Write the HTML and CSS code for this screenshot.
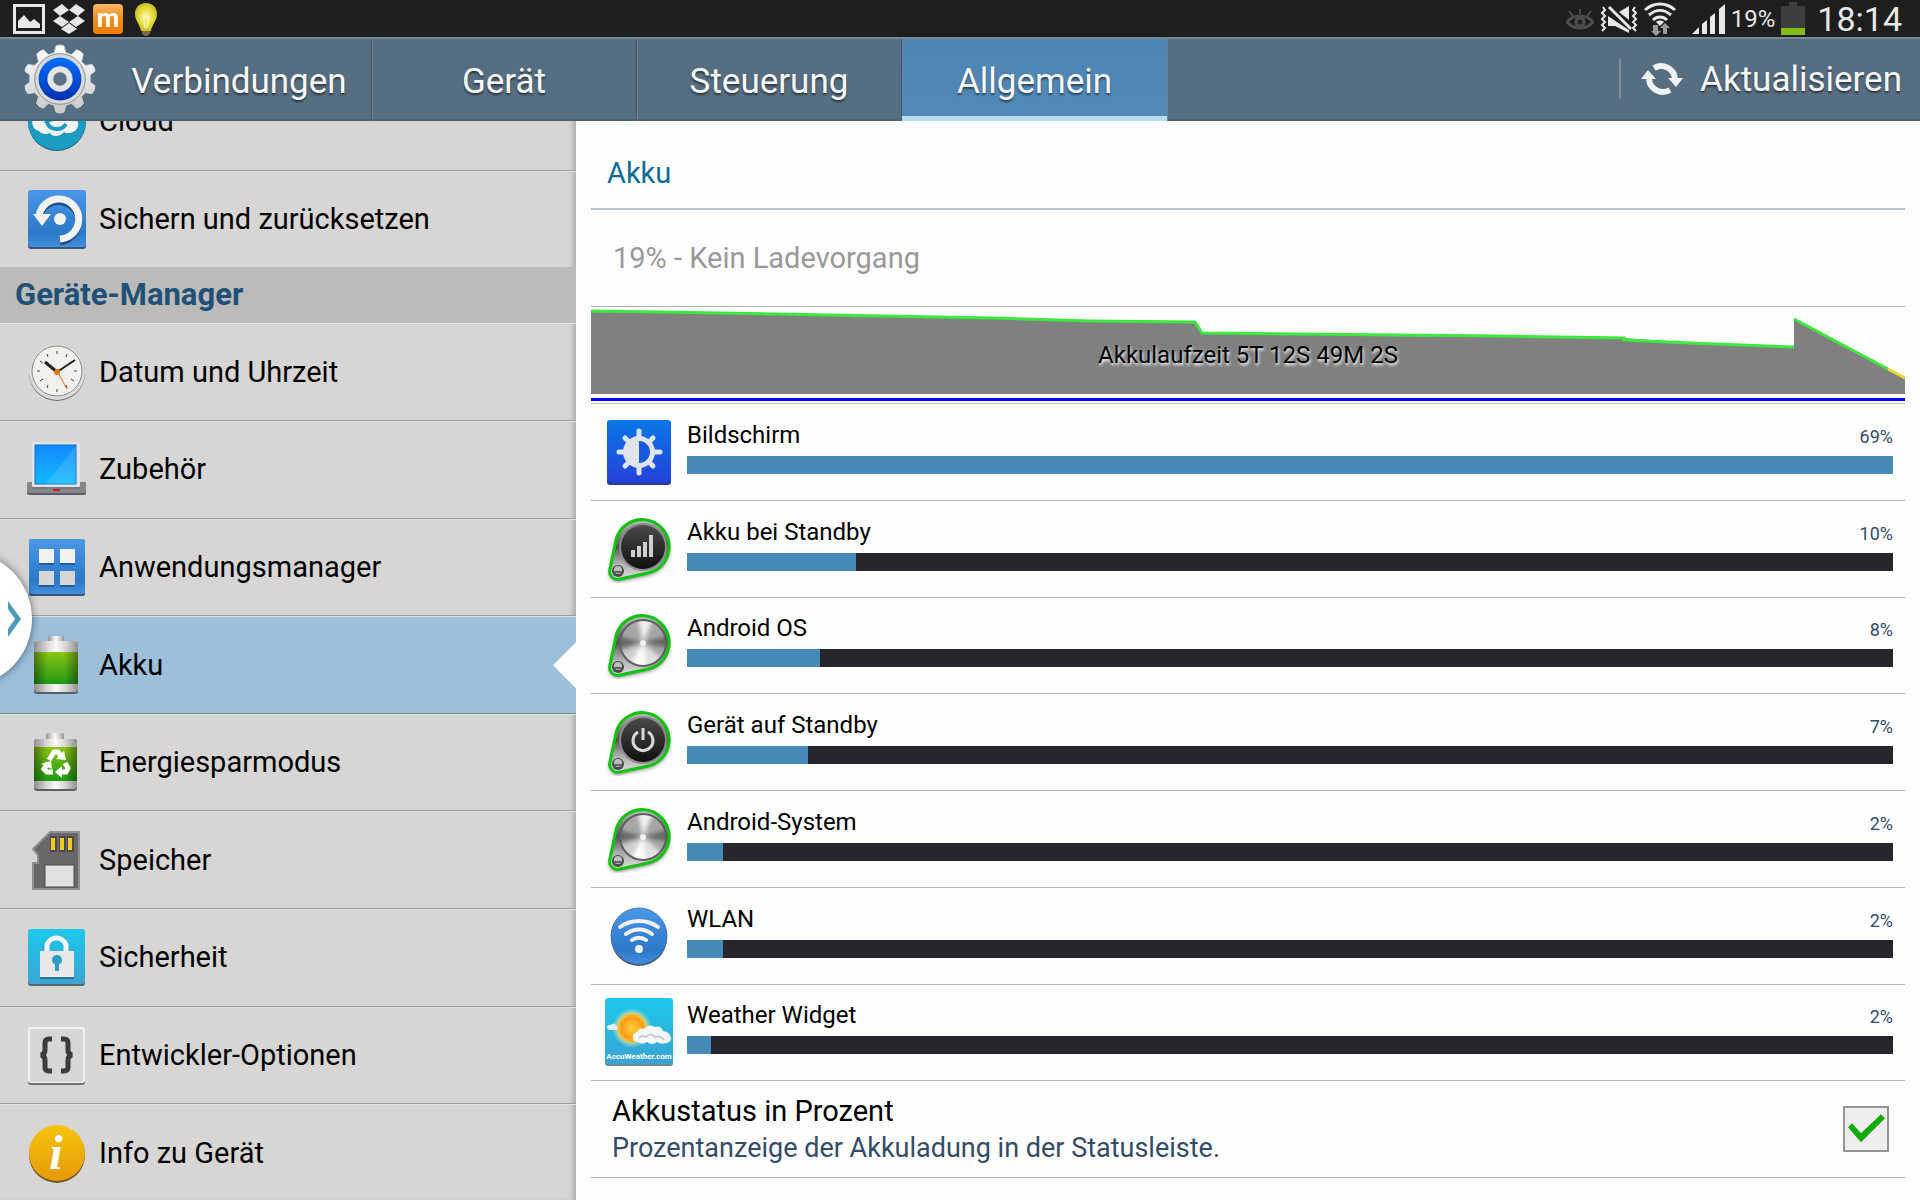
FILE: index.html
```html
<!DOCTYPE html>
<html lang="de">
<head>
    <meta charset="UTF-8">
    <meta name="viewport" content="width=device-width, initial-scale=1.0">
    <title>Einstellungen</title>
    <link rel="stylesheet" href="styles.css">
</head>
<body>

    <!-- Shared gradients and icon parts -->
    <svg class="defs" width="0" height="0" aria-hidden="true">
        <defs>
            <linearGradient id="blue" x1="0" y1="0" x2="0" y2="1">
                <stop offset="0" stop-color="#4a98e8"/><stop offset=".75" stop-color="#2c78c8"/><stop offset="1" stop-color="#4390e0"/>
            </linearGradient>
            <linearGradient id="deepblue" x1="0" y1="0" x2="0" y2="1">
                <stop offset="0" stop-color="#0a78e8"/><stop offset="1" stop-color="#2440d8"/>
            </linearGradient>
            <linearGradient id="ring" x1="0" y1="0" x2="0" y2="1">
                <stop offset="0" stop-color="#0070ff"/><stop offset="1" stop-color="#0030b0"/>
            </linearGradient>
            <linearGradient id="cyan" x1="0" y1="0" x2="0" y2="1">
                <stop offset="0" stop-color="#1cc8ea"/><stop offset="1" stop-color="#3ba4d4"/>
            </linearGradient>
            <linearGradient id="silver" x1="0" y1="0" x2="0" y2="1">
                <stop offset="0" stop-color="#ffffff"/><stop offset="1" stop-color="#c8c8c8"/>
            </linearGradient>
            <linearGradient id="metal" x1="0" y1="0" x2="1" y2="0">
                <stop offset="0" stop-color="#8f8f8f"/><stop offset=".3" stop-color="#d8d8d8"/><stop offset=".5" stop-color="#fafafa"/><stop offset=".75" stop-color="#d0d0d0"/><stop offset="1" stop-color="#8f8f8f"/>
            </linearGradient>
            <linearGradient id="green" x1="0" y1="0" x2="0" y2="1">
                <stop offset="0" stop-color="#8cc414"/><stop offset="1" stop-color="#1f9a14"/>
            </linearGradient>
            <linearGradient id="shade" x1="0" y1="0" x2="1" y2="0">
                <stop offset="0" stop-color="#000" stop-opacity=".4"/><stop offset=".3" stop-color="#000" stop-opacity="0"/><stop offset=".7" stop-color="#000" stop-opacity="0"/><stop offset="1" stop-color="#000" stop-opacity=".4"/>
            </linearGradient>
            <linearGradient id="screen" x1="0" y1="0" x2="0" y2="1">
                <stop offset="0" stop-color="#1488ff"/><stop offset="1" stop-color="#10bcff"/>
            </linearGradient>
            <linearGradient id="gold" x1="0" y1="0" x2="0" y2="1">
                <stop offset="0" stop-color="#f6c40c"/><stop offset="1" stop-color="#e69a04"/>
            </linearGradient>
            <linearGradient id="orange" x1="0" y1="0" x2="0" y2="1">
                <stop offset="0" stop-color="#f9b765"/><stop offset=".5" stop-color="#f08c1c"/><stop offset="1" stop-color="#ee7d00"/>
            </linearGradient>
            <linearGradient id="pinbody" x1="0" y1="0" x2="0" y2="1">
                <stop offset="0" stop-color="#c4c4c4"/><stop offset=".45" stop-color="#505050"/><stop offset=".7" stop-color="#a8a8a8"/><stop offset="1" stop-color="#e0e0e0"/>
            </linearGradient>
            <linearGradient id="dark" x1="0" y1="0" x2="0" y2="1">
                <stop offset="0" stop-color="#4a4a4a"/><stop offset="1" stop-color="#101010"/>
            </linearGradient>
            <radialGradient id="sun">
                <stop offset="0" stop-color="#ffd23c"/><stop offset=".7" stop-color="#fb9d1c"/><stop offset="1" stop-color="#f7c948"/>
            </radialGradient>
            <radialGradient id="glow">
                <stop offset="0" stop-color="#fffbb0"/><stop offset=".6" stop-color="#e8e040"/><stop offset="1" stop-color="#c8c020"/>
            </radialGradient>
            <radialGradient id="halo">
                <stop offset=".6" stop-color="#fff3a0" stop-opacity=".8"/><stop offset="1" stop-color="#fff3a0" stop-opacity="0"/>
            </radialGradient>
            <filter id="soft" x="-20%" y="-20%" width="140%" height="140%"><feGaussianBlur stdDeviation="2"/></filter>
            <clipPath id="discClip"><circle cx="38" cy="32" r="23"/></clipPath>
        </defs>
        <symbol id="pin" viewBox="0 0 68 68">
            <path d="M5 56 L11 27 A27 27 0 1 1 43 60 L15 66 A8 8 0 0 1 5 56Z" fill="#000" opacity=".6" filter="url(#soft)"/>
            <path d="M5 54 L11 25 A27 27 0 1 1 43 58 L15 64 A8 8 0 0 1 5 54Z" fill="url(#pinbody)" stroke="#0fc40f" stroke-width="3"/>
            <circle cx="13" cy="56" r="6" fill="#4a4a4a"/>
            <circle cx="13" cy="55" r="4" fill="#bdbdbd"/>
            <path d="M9 57h8" stroke="#666" stroke-width="2"/>
        </symbol>
        <symbol id="disc" viewBox="0 0 68 68">
            <g clip-path="url(#discClip)">
                <circle cx="38" cy="32" r="23" fill="#a6a6a6"/>
                <g filter="url(#soft)">
                    <path d="M38 32L11 38L11 24Z" fill="#666"/>
                    <path d="M38 32L65 24L65 37Z" fill="#666"/>
                    <path d="M38 32L32 4H50Z" fill="#f0f0f0"/>
                    <path d="M38 32L22 60H42Z" fill="#fff"/>
                    <path d="M38 32L42 60L62 52Z" fill="#e0e0e0"/>
                    <path d="M38 32L10 44L22 60Z" fill="#d0d0d0"/>
                </g>
                <circle cx="38" cy="32" r="3" fill="#fff" opacity=".8"/>
            </g>
            <circle cx="38" cy="32" r="23" fill="none" stroke="#5f5f5f" stroke-width="2"/>
        </symbol>
    </svg>

    <div class="statusbar">
        <div class="notifications">
            <svg width="32" height="30" viewBox="0 0 32 30"><path d="M1.500 1.500h29v27h-29z" fill="none" stroke="#e8e8e8" stroke-width="3"/><path d="M5 24V17l6-6 6 7 4-3 6 5v4z" fill="#e8e8e8"/></svg>
            <svg width="32" height="30" viewBox="0 0 32 30" fill="#e8e8e8"><path d="M9 0l7 6-9 6-7-6zM23 0l9 6-7 6-9-6zM0 17l7-5 9 6-7 5zM25 12l7 5-9 6-7-5zM16 19l8 6-8 5-8-5z"/></svg>
            <svg width="30" height="30" viewBox="0 0 30 30"><rect width="30" height="30" rx="4" fill="url(#orange)"/><text x="15" y="23" text-anchor="middle" class="m-logo">m</text></svg>
            <svg width="28" height="34" viewBox="0 0 28 34"><path d="M15 1c7 0 11 5 11 11 0 7-5 10-6 17h-10C9 22 4 19 4 12 4 6 8 1 15 1z" fill="url(#glow)"/><path d="M12 14l2 12M18 14l-2 12" stroke="#fffde0" stroke-width="1" fill="none"/><path d="M11 29h8v3l-3 2h-2l-3-2z" fill="#7a6a50"/></svg>
        </div>
        <div class="system">
            <svg width="28" height="22" viewBox="0 0 28 22" fill="none" stroke="#4c4c4c" stroke-width="2"><path d="M1 14c7-8 19-8 26 0-7 8-19 8-26 0z" stroke-width="3"/><circle cx="14" cy="14" r="4" stroke-width="3"/><path d="M14 1v5M3 3l4 5M25 3l-4 5"/></svg>
            <svg width="38" height="28" viewBox="0 0 38 28" fill="none" stroke="#e8e8e8" stroke-width="2"><path d="M3 2l2 3-3 3 3 3-3 3 3 3-3 3 3 3-3 3M35 2l-2 3 3 3-3 3 3 3-3 3 3 3-3 3 3 3"/><path d="M8 11v10h7l14 7v-3zM19 7l10-6v14z" fill="#e8e8e8" stroke="none"/><path d="M9 2l22 22" stroke-width="3"/></svg>
            <svg width="32" height="34" viewBox="0 0 32 34" fill="none" stroke="#e8e8e8" stroke-width="3"><path d="M1 8c9-8 21-8 30 0M5 13c7-6 15-6 22 0M9 18c4-4 10-4 14 0"/><path d="M12 20c2-2 6-2 8 0l-4 4z" fill="#e8e8e8" stroke="none"/><path d="M9 23h5v6h3l-5 5-5-5h2zM19 32v-6h-3l5-5 5 5h-3v6z" fill="#9a9a9a" stroke="none"/></svg>
            <svg class="signal" width="33" height="30" viewBox="0 0 33 30" fill="#e8e8e8"><path d="M0 30l7-7v7zM10 20l5-4v14h-5zM18 13l5-4v21h-5zM27 5l6-5v30h-6z"/></svg>
            <span class="charge">19%</span>
            <svg width="24" height="33" viewBox="0 0 24 33"><path d="M8 0h8v4h8v22H0V4h8z" fill="#3d3d3d"/><path d="M0 26h24v7H0z" fill="#82bc14"/></svg>
            <span class="clock">18:14</span>
        </div>
    </div>

    <header class="topbar">
        <svg class="gear" width="72" height="72" viewBox="0 0 74 74">
            <path d="M33 3q4-2 8 0l2 7 6 2 5-5q5 1 7 5l-2 7 4 4 7-1q3 3 3 7l-5 4v7l5 4q0 5-3 8l-7-1-4 4 2 7q-2 4-7 5l-5-5-6 2-2 7q-4 2-8 0l-2-7-6-2-5 5q-5-1-7-5l2-7-4-4-7 1q-3-3-3-8l5-4v-7l-5-4q0-4 3-7l7 1 4-4-2-7q2-4 7-5l5 5 6-2z" fill="url(#silver)" stroke="#cfd4d8" stroke-width="1"/>
            <circle cx="37" cy="37" r="26" fill="#dadada" stroke="#8c8c8c" stroke-width="1"/>
            <circle cx="37" cy="37" r="22" fill="url(#ring)"/>
            <circle cx="37" cy="37" r="10" fill="#587184" stroke="#e4e4e4" stroke-width="6"/>
        </svg>
        <nav class="tabs">
            <button class="tab">Verbindungen</button>
            <button class="tab">Gerät</button>
            <button class="tab">Steuerung</button>
            <button class="tab active">Allgemein</button>
        </nav>
        <button class="refresh">
            <svg width="42" height="36" viewBox="0 0 42 36"><g fill="none" stroke="#f2f2f2" stroke-width="6"><path d="M13 7a14 14 0 0 1 21 11"/><path d="M29 29A14 14 0 0 1 8 18"/></g><path d="M27 17h15l-7 9zM0 18h15L7 9z" fill="#f2f2f2"/></svg>
            Aktualisieren
        </button>
    </header>

    <div class="content">
        <aside class="sidebar">
            <nav class="menu">
                <a class="item" href="#">
                    <svg class="icon" viewBox="0 0 60 60"><circle cx="30" cy="31" r="29" fill="#155f78"/><circle cx="30" cy="30" r="29" fill="#1c9cc2"/><path d="M12 40a9 9 0 0 1-3-16c2-12 20-16 26-6 9-2 15 4 14 10a8 8 0 0 1-3 13c-5 2-8 1-9 0-4 5-12 5-14 1-4 2-9 1-11-2z" fill="#f2f2f2"/><path d="M20 30c1 9 14 11 19 3" fill="none" stroke="#1c9cc2" stroke-width="4"/><path d="M17 32l3-7 7 5z" fill="#1c9cc2"/></svg>
                    Cloud
                </a>
                <a class="item" href="#">
                    <svg class="icon" viewBox="0 0 60 60"><rect x="1" y="2" width="58" height="58" rx="3" fill="#3a5676"/><rect x="1" y="1" width="58" height="57" rx="3" fill="url(#blue)"/><path d="M12 27a20 20 0 1 1 21 24" transform="translate(0 2)" fill="none" stroke="#1f4f86" stroke-width="6"/><path d="M12 27a20 20 0 1 1 21 23" fill="none" stroke="#f2f2f2" stroke-width="7"/><path d="M6 25h18L15 37z" fill="#f2f2f2"/><circle cx="33" cy="30" r="6" fill="#f2f2f2"/></svg>
                    Sichern und zurücksetzen
                </a>
                <h2 class="group">Geräte-Manager</h2>
                <a class="item" href="#">
                    <svg class="icon" viewBox="0 0 60 60"><circle cx="30" cy="31" r="28" fill="#6a6a6a"/><circle cx="30" cy="30" r="28" fill="#dcdcdc"/><circle cx="30" cy="29" r="25" fill="#f3f1ee" stroke="#8a8a8a" stroke-width="1"/><g stroke="#444" stroke-width="1"><path d="M30 9v3M30 47v3M10 29h3M47 29h3M20 12l1 3M40 12l-1 3M13 19l3 2M47 19l-3 2M13 39l3-2M47 39l-3-2M20 46l1-3M40 46l-1-3"/></g><path d="M30 30L18 20" stroke="#222" stroke-width="3"/><path d="M30 30l18-12" stroke="#222" stroke-width="2"/><path d="M30 29l10 18" stroke="#f26a1b" stroke-width="1"/><circle cx="30" cy="30" r="3" fill="#f26a1b"/></svg>
                    Datum und Uhrzeit
                </a>
                <a class="item" href="#">
                    <svg class="icon" viewBox="0 0 60 60"><rect x="0" y="43" width="59" height="13" rx="2" fill="#5c5d60"/><rect x="0" y="43" width="59" height="11" rx="2" fill="#85878b"/><rect x="5" y="4" width="48" height="46" rx="2" fill="#77797c"/><rect x="5" y="3" width="48" height="45" rx="1" fill="#e2e4e6"/><rect x="8" y="6" width="41" height="39" fill="url(#screen)" stroke="#0a70c8"/><path d="M49 7v38H19z" fill="#fff" opacity=".12"/><rect x="26" y="50" width="7" height="2" fill="#d01818"/></svg>
                    Zubehör
                </a>
                <a class="item" href="#">
                    <svg class="icon" viewBox="0 0 60 60"><rect x="2" y="3" width="56" height="56" rx="2" fill="#3a5676"/><rect x="2" y="2" width="56" height="55" rx="2" fill="url(#blue)"/><path d="M12 13h15v15H12zM33 13h15v15H33zM12 35h15v15H12zM33 35h15v15H33z" fill="#235a98"/><path d="M12 12h15v14H12zM33 12h15v14H33z" fill="#f2f2f2"/><path d="M12 34h15v14H12zM33 34h15v14H33z" fill="#d4d6d8"/></svg>
                    Anwendungsmanager
                </a>
                <a class="item selected" href="#">
                    <svg class="icon" viewBox="0 0 60 60"><rect x="21" y="1" width="16" height="8" rx="2" fill="url(#metal)"/><rect x="7" y="7" width="44" height="52" rx="3" fill="#5a5f63"/><rect x="7" y="6" width="44" height="51" rx="3" fill="url(#metal)"/><rect x="7" y="17" width="44" height="32" fill="url(#green)"/><rect x="7" y="17" width="44" height="32" fill="url(#shade)"/></svg>
                    Akku
                </a>
                <a class="item" href="#">
                    <svg class="icon" viewBox="0 0 60 60"><rect x="19" y="1" width="18" height="8" rx="2" fill="url(#metal)"/><rect x="7" y="7" width="43" height="52" rx="3" fill="#5a5f63"/><rect x="7" y="7" width="43" height="50" rx="3" fill="url(#metal)"/><rect x="7" y="15" width="43" height="34" fill="url(#green)"/><rect x="7" y="15" width="43" height="34" fill="url(#shade)"/><g fill="none" stroke="#fff" stroke-width="5"><path d="M22 28l5-8h4l3 4"/><path d="M38 31l3 5-2 4h-6"/><path d="M26 40h-6l-3-3 4-6"/></g><path d="M29 27l10 1-2-9zM35 34v12l-7-6zM14 32l10-3 1 8z" fill="#fff"/></svg>
                    Energiesparmodus
                </a>
                <a class="item" href="#">
                    <svg class="icon" viewBox="0 0 60 60"><path d="M23 2h29v57H6V33h5v-8l-5-6z" fill="#67696b" stroke="#8e9092" stroke-width="2"/><path d="M23 6h7v16h-7zM32 6h7v16h-7zM40 6h7v16h-7z" fill="#4a4b4d"/><path d="M24 8h4v12h-4zM33 8h4v12h-4zM41 8h4v12h-4z" fill="#f2cc1c"/><path d="M18 35h29v22H18z" fill="#dfe1e2" stroke="#48494b"/></svg>
                    Speicher
                </a>
                <a class="item" href="#">
                    <svg class="icon" viewBox="0 0 60 60"><rect x="1" y="3" width="57" height="56" rx="3" fill="#55666e"/><rect x="1" y="2" width="57" height="55" rx="3" fill="url(#cyan)"/><path d="M20 26v-8a10 10 0 0 1 19 0v8" fill="none" stroke="#f4f4f4" stroke-width="5"/><path d="M13 26h34v26H13z" fill="#2a7896"/><path d="M13 24h34v26H13z" fill="#e8e8e8"/><circle cx="30" cy="33" r="5" fill="#2e9dc4"/><path d="M28 34h4v10h-4z" fill="#2e9dc4"/></svg>
                    Sicherheit
                </a>
                <a class="item" href="#">
                    <svg class="icon" viewBox="0 0 60 60"><rect x="1" y="3" width="57" height="57" rx="3" fill="#6e6e6e"/><rect x="1" y="2" width="57" height="56" rx="3" fill="#f2f2f2"/><rect x="3" y="4" width="53" height="53" rx="2" fill="#d6d6d6"/><g fill="none" stroke="#3c3c3c" stroke-width="5"><path d="M25 14h-3q-4 0-4 4v7q0 4-4 5 4 1 4 5v7q0 4 4 4h3"/><path d="M34 14h3q4 0 4 4v7q0 4 4 5-4 1-4 5v7q0 4-4 4h-3"/></g></svg>
                    Entwickler-Optionen
                </a>
                <a class="item" href="#">
                    <svg class="icon" viewBox="0 0 60 60"><circle cx="30" cy="32" r="28" fill="#6b5a2c"/><circle cx="30" cy="30" r="28" fill="url(#gold)"/><text x="29" y="46" text-anchor="middle" class="info-letter">i</text></svg>
                    Info zu Gerät
                </a>
            </nav>
        </aside>

        <main class="panel">
            <h1 class="title">Akku</h1>
            <p class="state">19% - Kein Ladevorgang</p>
            <div class="chart">
                <svg viewBox="0 0 1314 96" preserveAspectRatio="none">
                    <path d="M0 4L70 5L400 11L500 14L604 15L611 26L909 29L1033 31L1099 36L1203 40V12L1314 71V87H0z" fill="#808080"/>
                    <path d="M0 4L70 5L400 11L500 14L604 15L611 26L909 29L1033 31V33L1099 36L1203 40M1203 12L1297 62" fill="none" stroke="#3ee83e" stroke-width="3"/>
                    <path d="M1297 62l17 9" stroke="#e8d830" stroke-width="3"/>
                    <path d="M0 92.500H1314" stroke="#0000ff" stroke-width="3"/>
                </svg>
                <span class="runtime">Akkulaufzeit 5T 12S 49M 2S</span>
            </div>

            <div class="usage">
                <div class="row">
                    <svg class="app-icon" viewBox="0 0 68 68"><rect x="2" y="3" width="64" height="64" rx="3" fill="#2a3c8c"/><rect x="2" y="2" width="64" height="63" rx="3" fill="url(#deepblue)"/><g stroke="#dfe3ea" stroke-width="5" stroke-linecap="round"><path d="M34 13v6M34 49v6M14 34h6M48 34h7M20 20l4 4M48 20l-4 4M20 48l4-4M48 48l-4-4"/></g><circle cx="34" cy="34" r="16" fill="#dfe3ea"/><path d="M34 23a11 11 0 0 1 0 22z" fill="#1a58dc"/></svg>
                    <div class="app">
                        <div class="label"><span>Bildschirm</span><span class="percent">69%</span></div>
                        <div class="bar"><div class="fill" style="width: 100%"></div></div>
                    </div>
                </div>
                <div class="row">
                    <svg class="app-icon" viewBox="0 0 68 68"><use href="#pin"/><circle cx="38" cy="32" r="24" fill="#8a8a8a"/><circle cx="38" cy="32" r="22" fill="url(#dark)"/><path d="M26 35h4v7h-4zM32 31h4v11h-4zM38 27h4v15h-4zM44 20h4v22h-4z" fill="#cfcfcf"/></svg>
                    <div class="app">
                        <div class="label"><span>Akku bei Standby</span><span class="percent">10%</span></div>
                        <div class="bar"><div class="fill" style="width: 14%"></div></div>
                    </div>
                </div>
                <div class="row">
                    <svg class="app-icon" viewBox="0 0 68 68"><use href="#pin"/><use href="#disc"/></svg>
                    <div class="app">
                        <div class="label"><span>Android OS</span><span class="percent">8%</span></div>
                        <div class="bar"><div class="fill" style="width: 11%"></div></div>
                    </div>
                </div>
                <div class="row">
                    <svg class="app-icon" viewBox="0 0 68 68"><use href="#pin"/><circle cx="38" cy="32" r="24" fill="#8a8a8a"/><circle cx="38" cy="32" r="22" fill="url(#dark)"/><path d="M33 24a10 10 0 1 0 10 0M38 20v12" fill="none" stroke="#d8d8d8" stroke-width="3"/></svg>
                    <div class="app">
                        <div class="label"><span>Gerät auf Standby</span><span class="percent">7%</span></div>
                        <div class="bar"><div class="fill" style="width: 10%"></div></div>
                    </div>
                </div>
                <div class="row">
                    <svg class="app-icon" viewBox="0 0 68 68"><use href="#pin"/><use href="#disc"/></svg>
                    <div class="app">
                        <div class="label"><span>Android-System</span><span class="percent">2%</span></div>
                        <div class="bar"><div class="fill" style="width: 3%"></div></div>
                    </div>
                </div>
                <div class="row">
                    <svg class="app-icon" viewBox="0 0 68 68"><circle cx="34" cy="36" r="28" fill="#3d5470"/><circle cx="34" cy="34" r="28" fill="url(#blue)" stroke="#4a78ac"/><g fill="none" stroke="#f2f2f2" stroke-width="4" stroke-linecap="round"><path d="M15 25c11-8 27-8 38 0M21 32c8-6 18-6 26 0M27 38c4-3 10-3 14 0"/></g><circle cx="34" cy="47" r="4" fill="#f2f2f2"/></svg>
                    <div class="app">
                        <div class="label"><span>WLAN</span><span class="percent">2%</span></div>
                        <div class="bar"><div class="fill" style="width: 3%"></div></div>
                    </div>
                </div>
                <div class="row">
                    <svg class="app-icon" viewBox="0 0 68 68"><rect y="1" width="68" height="67" rx="3" fill="#6a8a94"/><rect width="68" height="66" rx="3" fill="url(#cyan)"/><circle cx="27" cy="30" r="20" fill="url(#halo)"/><circle cx="27" cy="30" r="15" fill="url(#sun)"/><path d="M2 29q1-3 4-2 2-3 5 0 3 3 0 5H5q-3 0-3-3z" fill="#dff2f8"/><path d="M28 40q-1-5 4-6 2-5 7-3 5-6 11-2 6-2 8 4 7 1 8 7 0 4-4 5-6 2-10-1-5 4-10 0-5 3-9 0-5 0-5-4z" fill="#f4f6f8"/><path d="M34 40q3-4 7-1 5-5 9 0 5-2 9 3" fill="none" stroke="#c4ced6" stroke-width="2"/><text x="34" y="61" text-anchor="middle" class="weather-brand">AccuWeather.com</text></svg>
                    <div class="app">
                        <div class="label"><span>Weather Widget</span><span class="percent">2%</span></div>
                        <div class="bar"><div class="fill" style="width: 2%"></div></div>
                    </div>
                </div>
                <label class="row option" for="showPercent">
                    <span class="option-text">
                        <span class="option-name">Akkustatus in Prozent</span>
                        <span class="option-info">Prozentanzeige der Akkuladung in der Statusleiste.</span>
                    </span>
                    <input type="checkbox" id="showPercent" checked>
                </label>
            </div>
        </main>
    </div>

    <!-- Pull-out handle of the multi window bar -->
    <button class="handle" aria-label="Multi Window">
        <svg width="14" height="36" viewBox="0 0 14 36"><path d="M0 0L13 18L0 36V28L7 18L0 8z" fill="#4a9ab8"/></svg>
    </button>

</body>
</html>
```

FILE: styles.css
```css
* {
    box-sizing: border-box;
}
body {
    margin: 0;
    height: 100vh;
    display: flex;
    flex-direction: column;
    overflow: hidden;
    background-color: #fefefe;
    font-family: Roboto, "Liberation Sans", sans-serif;
    color: #000;
}
button {
    font: inherit;
    color: inherit;
    border: none;
    padding: 0;
    background: none;
    cursor: pointer;
}
h1, h2, p {
    margin: 0;
    font-weight: normal;
}
svg {
    display: block;
    flex-shrink: 0;
}
.defs {
    position: absolute;
}

/* Status bar */
.statusbar {
    flex-shrink: 0;
    height: 37px;
    padding: 0 18px 0 13px;
    display: flex;
    justify-content: space-between;
    align-items: center;
    background-color: #1e1e1e;
    color: #e8e8e8;
}
.notifications, .system {
    display: flex;
    align-items: center;
    gap: 8px;
}
.notifications svg {
    overflow: visible;
}
.system {
    gap: 6px;
}
.signal {
    margin-left: 10px;
}
.charge {
    font-size: 24px;
}
.clock {
    font-size: 34px;
    line-height: 37px;
    margin-left: 6px;
    padding-top: 2px;
}
.m-logo {
    font: bold 26px Roboto, sans-serif;
    fill: #fff;
}

/* Tabs */
.topbar {
    flex-shrink: 0;
    height: 84px;
    display: flex;
    align-items: center;
    padding: 0 18px 0 24px;
    background-color: #566e81;
    border-top: 2px solid #75899a;
    border-bottom: 2px solid #4a6374;
    color: #f8f8f8;
    font-size: 35px;
    text-shadow: 0 2px 2px rgba(0, 0, 0, 0.5);
}
.gear {
    margin-right: 11px;
}
.tabs {
    display: flex;
    align-self: stretch;
    margin-bottom: -2px;
}
.tab {
    width: 265px;
    padding-top: 2px;
    border-right: 1px solid #43596a;
    box-shadow: 1px 0 0 #6b8294;
    text-shadow: inherit;
}
.tab.active {
    background: linear-gradient(#4f85b1, #5189b8);
    border-bottom: 5px solid #b5dbf5;
    border-right: none;
    padding-top: 7px;
}
.refresh {
    margin-left: auto;
    height: 40px;
    padding-left: 20px;
    display: flex;
    align-items: center;
    gap: 17px;
    border-left: 2px solid #7c8f9d;
    text-shadow: inherit;
}

/* Columns */
.content {
    flex: 1;
    min-height: 0;
    display: flex;
}
.sidebar {
    width: 30%;
    overflow: hidden;
    background-color: #d7d6d4;
    box-shadow: inset -6px 0 6px -4px rgba(0, 0, 0, 0.25);
}
/* list is scrolled so that its first entry is half hidden */
.menu {
    height: calc(100% + 50px);
    margin-top: -48px;
    display: flex;
    flex-direction: column;
}
.item {
    flex: 1;
    display: flex;
    align-items: center;
    gap: 12px;
    padding-left: 27px;
    border-bottom: 1px solid #9c9c9b;
    box-shadow: inset 0 1px 0 #e4e3e1;
    color: #000;
    font-size: 29px;
    text-decoration: none;
}
.item:nth-child(2) {
    border-bottom: none;
}
.icon {
    width: 60px;
    height: 60px;
}
.group {
    height: 56px;
    padding-left: 15px;
    background-color: #bbbbb9;
    color: #1f5078;
    font-size: 31px;
    font-weight: bold;
    line-height: 56px;
}
.item.selected {
    position: relative;
    background-color: #9cbfda;
    border-bottom-color: #74899a;
}
.item.selected::after {
    content: "";
    position: absolute;
    right: 0;
    top: 26px;
    width: 23px;
    height: 46px;
    background-color: #fefefe;
    clip-path: polygon(100% 0, 0 50%, 100% 100%);
}
.info-letter {
    font: italic bold 48px "Liberation Serif", serif;
    fill: #fff;
}

/* Battery panel */
.panel {
    flex: 1;
    padding: 0 15px 22px;
    display: flex;
    flex-direction: column;
}
.title {
    height: 89px;
    padding: 16px 16px 0;
    border-bottom: 2px solid #b4c2cc;
    color: #086c96;
    font-size: 29px;
    line-height: 72px;
}
.state {
    height: 97px;
    padding: 0 22px;
    border-bottom: 1px solid #b0b0b0;
    color: #999;
    font-size: 29px;
    line-height: 97px;
}
.chart {
    position: relative;
    height: 97px;
    border-bottom: 1px solid #c0c0c0;
}
.chart svg {
    width: 100%;
    height: 96px;
}
.runtime {
    position: absolute;
    left: 0;
    right: 0;
    top: 32px;
    text-align: center;
    font-size: 24px;
    line-height: 32px;
    text-shadow: 1px 2px 3px #fff;
}
.usage {
    flex: 1;
    display: grid;
    grid-auto-rows: 1fr;
}
.row {
    display: flex;
    align-items: center;
    gap: 14px;
    padding: 0 12px 0 14px;
    border-bottom: 1px solid #b4b4b4;
}
.app-icon {
    width: 68px;
    height: 68px;
}
.app {
    flex: 1;
    padding-bottom: 10px;
}
.label {
    display: flex;
    justify-content: space-between;
    font-size: 24px;
    line-height: 30px;
    margin-bottom: 6px;
}
.percent {
    color: #344c68;
    font-size: 18px;
    line-height: 34px;
    height: 30px;
}
.bar {
    height: 18px;
    background-color: #28262c;
}
.fill {
    height: 100%;
    background-color: #468ab7;
}
.weather-brand {
    font: bold 8px Roboto, sans-serif;
    fill: #fff;
}
.option {
    justify-content: space-between;
    padding: 0 16px 0 21px;
    cursor: pointer;
}
.option-text {
    display: flex;
    flex-direction: column;
    padding-top: 2px;
}
.option-name {
    font-size: 29px;
    line-height: 37px;
}
.option-info {
    color: #344c68;
    font-size: 27px;
    line-height: 37px;
}
.option input {
    appearance: none;
    width: 46px;
    height: 46px;
    margin: 0;
    border: 2px solid #959595;
    background-color: #eee;
}
.option input:checked::after {
    content: "";
    display: block;
    width: 42px;
    height: 42px;
    background-color: #17a80a;
    clip-path: polygon(3px 19px, 7px 15px, 16px 25px, 36px 6px, 40px 10px, 16px 34px);
}

.handle {
    position: absolute;
    left: -102px;
    top: calc(50% + 19px);
    width: 134px;
    height: 134px;
    margin-top: -67px;
    padding-left: 110px;
    border-radius: 50%;
    background-color: #fff;
    box-shadow: 0 0 8px rgba(0, 0, 0, 0.5);
}
```
